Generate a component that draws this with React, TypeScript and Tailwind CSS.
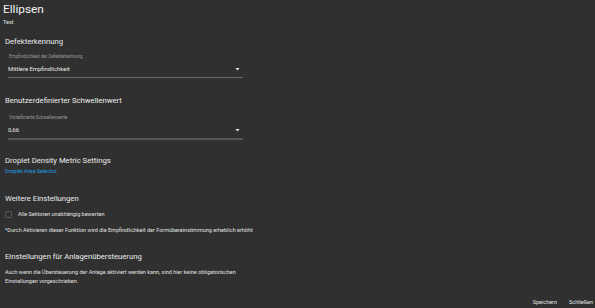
import React from "react";

function SelectField({ label, value, thick }: { label: string; value: string; thick?: boolean }) {
  return (
    <div className="ml-[3px] w-[235px]">
      <div className="text-[4.5px] leading-[6px] text-[#9a9a9a] pl-[1px]">{label}</div>
      <div className="mt-[4px] flex items-center justify-between h-[10px]">
        <span className="text-[5.9px] leading-[10px] text-[#e8e8e8]">{value}</span>
        <span className="mr-[3px] w-[5px] h-[3px] bg-[#e0e0e0] [clip-path:polygon(0_0,100%_0,50%_100%)]" />
      </div>
      <div className={`mt-[3px] w-full ${thick ? "h-[2px] bg-[#555]" : "h-[1px] bg-[#6a6a6a]"}`} />
    </div>
  );
}

export default function App() {
  return (
    <div
      className="w-[595px] h-[308px] bg-[#303030] text-white relative overflow-hidden"
      style={{ fontFamily: "Roboto, 'Liberation Sans', sans-serif" }}
    >
      <div className="pl-[3px] pt-[1px]">
        <div className="text-[11.8px] leading-[16px] text-[#f2f2f2]">Ellipsen</div>
        <div className="text-[5.5px] leading-[7px] mt-[2px] text-[#e0e0e0]">Test</div>
      </div>

      <div className="pl-[5px]">
        {/* Defekterkennung */}
        <div className="mt-[10px] text-[7.7px] leading-[12px] text-[#ececec]">Defekterkennung</div>
        <div className="mt-[6px]">
          <SelectField label="Empfindlichkeit der Defekterkennung" value="Mittlere Empfindlichkeit" />
        </div>

        {/* Schwellenwert */}
        <div className="mt-[17px] text-[7.7px] leading-[12px] text-[#ececec]">Benutzerdefinierter Schwellenwert</div>
        <div className="mt-[8px]">
          <SelectField label="Vordefinierte Schwellenwerte" value="0,66" thick />
        </div>

        {/* Droplet */}
        <div className="mt-[15px] text-[7.7px] leading-[12px] text-[#ececec]">Droplet Density Metric Settings</div>
        <div className="mt-[0px] text-[5.5px] leading-[8px] text-[#1e9be0]">Droplet Area Selector</div>

        {/* Weitere */}
        <div className="mt-[18px] text-[7.7px] leading-[12px] text-[#ececec]">Weitere Einstellungen</div>
        <div className="mt-[5px] flex items-center gap-[6px]">
          <span className="w-[7px] h-[7px] border border-[#555] rounded-[1px]" />
          <span className="text-[5.5px] leading-[8px] text-[#e0e0e0]">Alle Sektoren unabhängig bewerten</span>
        </div>
        <div className="mt-[8px] text-[5.5px] leading-[8px] text-[#e0e0e0]">
          *Durch Aktivieren dieser Funktion wird die Empfindlichkeit der Formübereinstimmung erheblich erhöht
        </div>

        {/* Anlagenübersteuerung */}
        <div className="mt-[17px] text-[7.7px] leading-[12px] text-[#ececec]">Einstellungen für Anlagenübersteuerung</div>
        <div className="mt-[5px] w-[250px] text-[5.5px] leading-[9px] text-[#e0e0e0]">
          Auch wenn die Übersteuerung der Anlage aktiviert werden kann, sind hier keine obligatorischen Einstellungen vorgeschrieben.
        </div>
      </div>

      <div className="absolute right-[2px] bottom-[2px] flex gap-[12px] text-[5.5px] leading-[8px] text-[#e0e0e0]">
        <span>Speichern</span>
        <span>Schließen</span>
      </div>
    </div>
  );
}
